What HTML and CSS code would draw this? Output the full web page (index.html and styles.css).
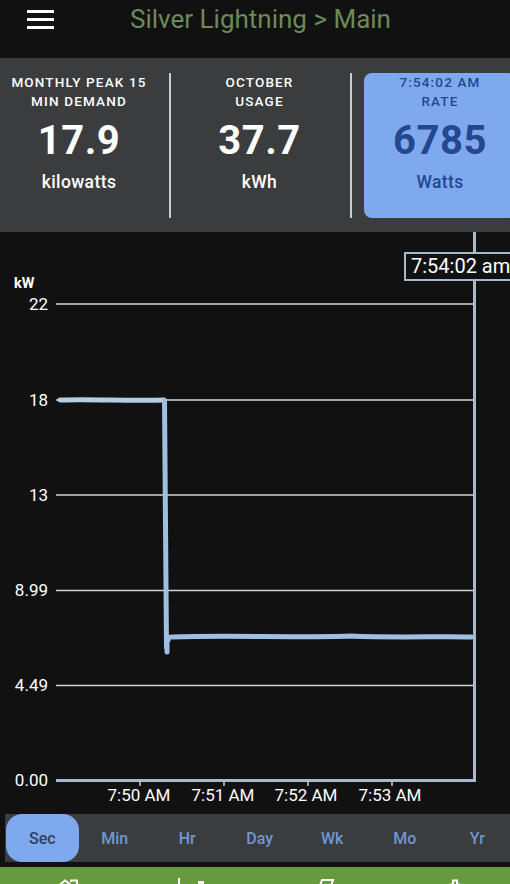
FILE: index.html
```html
<!DOCTYPE html>
<html lang="en">
<head>
    <meta charset="UTF-8">
    <meta name="viewport" content="width=device-width, initial-scale=1.0">
    <title>Silver Lightning</title>
    <link rel="stylesheet" href="styles.css">
</head>
<body>
    <div class="app">
        <div class="top_bar">
            <div class="menu_btn"><span></span><span></span><span></span></div>
            <div class="title">Silver Lightning &gt; Main</div>
        </div>

        <div class="stats">
            <div class="stat stat_peak">
                <div class="stat_label">MONTHLY PEAK 15<br>MIN DEMAND</div>
                <div class="stat_value">17.9</div>
                <div class="stat_unit">kilowatts</div>
            </div>
            <div class="stat_line"></div>
            <div class="stat stat_usage">
                <div class="stat_label">OCTOBER<br>USAGE</div>
                <div class="stat_value">37.7</div>
                <div class="stat_unit">kWh</div>
            </div>
            <div class="stat_line"></div>
            <div class="stat stat_on">
                <div class="stat_label">7:54:02 AM<br>RATE</div>
                <div class="stat_value">6785</div>
                <div class="stat_unit">Watts</div>
            </div>
        </div>

        <div class="chart">
            <svg class="chart_svg" width="510" height="580" viewBox="0 232 510 580">
                <g class="grid">
                    <line x1="56" y1="304" x2="474" y2="304"/>
                    <line x1="56" y1="400" x2="474" y2="400"/>
                    <line x1="56" y1="495" x2="474" y2="495"/>
                    <line x1="56" y1="590.5" x2="474" y2="590.5"/>
                    <line x1="56" y1="685.5" x2="474" y2="685.5"/>
                </g>
                <path class="axis" d="M56 780.5H474.5V232"/>
                <path class="ticks" d="M140 781v5M224 781v5M308 781v5M392 781v5"/>
                <path class="trace trace_high" d="M60 400C90 399 130 401 164 400"/>
                <path class="trace" d="M164.500 400.500L166.500 648M167 638V652M168 640C168 637 170 637 172 637C230 635 300 638 350 636C400 638 440 636 472 637"/>
                <g class="y_labels">
                    <text x="48" y="310">22</text>
                    <text x="48" y="406">18</text>
                    <text x="48" y="501">13</text>
                    <text x="48" y="596">8.99</text>
                    <text x="48" y="691">4.49</text>
                    <text x="48" y="786">0.00</text>
                </g>
                <g class="x_labels">
                    <text x="139" y="801">7:50 AM</text>
                    <text x="223" y="801">7:51 AM</text>
                    <text x="306" y="801">7:52 AM</text>
                    <text x="390" y="801">7:53 AM</text>
                </g>
                <text class="y_unit" x="14" y="288">kW</text>
            </svg>
            <div class="stamp">7:54:02 am</div>
        </div>

        <div class="ranges">
            <div class="range range_on">Sec</div>
            <div class="range">Min</div>
            <div class="range">Hr</div>
            <div class="range">Day</div>
            <div class="range">Wk</div>
            <div class="range">Mo</div>
            <div class="range">Yr</div>
        </div>

        <div class="nav">
            <svg class="nav_icons" width="510" height="17" viewBox="0 867 510 17">
                <path d="M56 888 65 880.500 71 885M71 882V880.500H77V888"/>
                <path d="M179 878V890"/>
                <rect class="nav_fill" x="198" y="881" width="6" height="6"/>
                <path d="M319 888 322 880H333L330 888"/>
                <path d="M449 888V885L453 884V880.500H457V884L461 885V888"/>
            </svg>
        </div>
    </div>
</body>
</html>
```

FILE: styles.css
```css
body{margin: 0;background: #111;font-family: Roboto, "Liberation Sans", sans-serif;}

.app{width: 510px;height: 884px;overflow: hidden;display: flex;flex-direction: column;background: #111;}

.top_bar{height: 58px;flex: none;display: flex;align-items: flex-start;}
.menu_btn{width: 27px;margin: 10px 0 0 27px;display: flex;flex-direction: column;gap: 5px;}
.menu_btn span{display: block;height: 3px;background: #fff;}
.title{width: 260px;margin: 3px 0 0 76px;text-align: center;font-size: 26px;line-height: 32px;color: #6b8a57;white-space: nowrap;}

.stats{height: 174px;flex: none;box-sizing: border-box;padding: 15px 0 14px;display: flex;overflow: hidden;background: #3b3c3e;}
.stat{flex: none;text-align: center;color: #fff;}
.stat_peak{width: 158px;margin-right: 11px;}
.stat_usage{width: 177px;margin-right: 2px;}
.stat_line{width: 2px;flex: none;background: #c9ccd0;}
.stat_on{width: 152px;margin-left: 12px;border-radius: 8px;background: #7fa9ee;color: #24478f;}
.stat_label{font-size: 13.500px;font-weight: 500;line-height: 18.500px;letter-spacing: 1.150px;}
.stat_value{margin-top: 7px;font-size: 40px;font-weight: 700;line-height: 47px;letter-spacing: 0.500px;}
.stat_unit{margin-top: 6px;font-size: 17.500px;font-weight: 500;line-height: 24px;letter-spacing: 0.400px;}

.chart{height: 580px;flex: none;position: relative;}
.chart_svg{display: block;}
.grid line{stroke: #d0d5d8;stroke-width: 1.500;}
.axis{fill: none;stroke: #a9b9c9;stroke-width: 3;}
.ticks{fill: none;stroke: #c5ccd2;stroke-width: 1.500;}
.trace{fill: none;stroke: #9dbfe2;stroke-width: 5;stroke-linecap: round;}
.trace_high{stroke: #b4cce4;}
.y_labels text{fill: #fff;font-size: 17px;text-anchor: end;}
.x_labels text{fill: #fff;font-size: 17px;text-anchor: middle;}
.y_unit{fill: #fff;font-size: 14.500px;font-weight: 700;}
.stamp{position: absolute;left: 404px;top: 20px;width: 120px;height: 29px;box-sizing: border-box;padding-left: 5px;border: 2px solid #a9b9c9;background: #111;color: #fff;font-size: 20px;line-height: 25px;white-space: nowrap;}

.ranges{height: 48px;flex: none;margin: 2px 0 0 5px;padding-left: 1px;display: flex;background: #3b3c3e;}
.range{width: 72.500px;flex: none;text-align: center;font-size: 16px;font-weight: 500;line-height: 49px;color: #6f97d2;}
.range_on{border-radius: 16px;background: #7fa9ee;color: #2e3f5f;}

.nav{height: 17px;flex: none;margin-top: 5px;background: #659a3e;}
.nav_icons{display: block;}
.nav_icons path{fill: none;stroke: #fff;stroke-width: 2;}
.nav_fill{fill: #fff;}
```
